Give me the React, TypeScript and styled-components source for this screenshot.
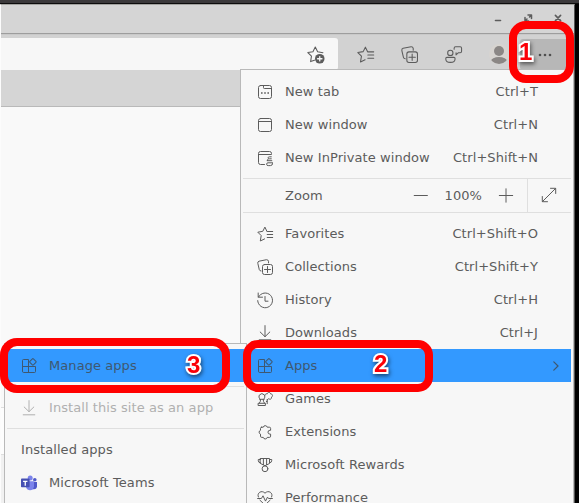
import React from "react";
import styled, { createGlobalStyle } from "styled-components";

const GlobalStyle = createGlobalStyle`
  * { box-sizing: border-box; }
  body { margin: 0; background: #000; overflow: hidden; }
`;

const Screen = styled.div`
  position: relative;
  width: 579px;
  height: 503px;
  overflow: hidden;
  background: #000;
  font-family: "DejaVu Sans", sans-serif;
  font-size: 13px;
  letter-spacing: 0.07px;
  color: #5c5c5c;
`;

const Desktop = styled.div`
  height: 4px;
  background: #3b393b;
  border-bottom: 1px solid #0c0c0c;
`;

const Window = styled.div`
  width: 575px;
  height: 499px;
  overflow: hidden;
  background: #fafafa;
  border-top: 1px solid #a3a3a0;
  border-left: 1px solid #fcfcfc;
  border-right: 1px solid #555;
`;

const TitleBar = styled.div`
  height: 29px;
  background: #d5d5d5;
  border-bottom: 1px solid #9d9d9d;
  display: flex;
  justify-content: flex-end;
  gap: 18px;
  padding: 7px 10px 0 0;
`;

const Toolbar = styled.div`
  height: 36px;
  background: linear-gradient(#c9c9c9 0 1px, #d2d2d2 1px);
  display: flex;
  align-items: flex-end;
`;

const AddressBar = styled.div`
  width: 337px;
  height: 32px;
  background: #f7f7f7;
  border-radius: 0 3px 3px 0;
  display: flex;
  justify-content: flex-end;
  align-items: center;
  padding-right: 14px;
`;

const Tools = styled.div`
  height: 32px;
  display: flex;
  align-items: center;
  gap: 27px;
  padding-left: 19px;
`;

const Avatar = styled.div`
  width: 20px;
  height: 20px;
  border-radius: 50%;
  background: #d7d4d0;
  overflow: hidden;
`;

const MoreButton = styled.div`
  width: 50px;
  height: 31px;
  margin-left: 11px;
  background: #b7b7b7;
  border-radius: 3px;
  display: flex;
  align-items: center;
  justify-content: center;
`;

const TabStrip = styled.div`
  height: 37px;
  background: #d5d5d5;
  border-bottom: 1px solid #b9b9b9;
`;

const Page = styled.div`
  display: flex;
  flex-direction: column;
  background: #f9f9f9;
`;

const PageBand = styled.div<{ $h: number; $bg: string }>`
  height: ${(p) => p.$h}px;
  background: ${(p) => p.$bg};
  border-bottom: 1px solid #dedede;
`;

const Menu = styled.div<{ $x: number; $y: number; $w: number }>`
  position: absolute;
  left: ${(p) => p.$x}px;
  top: ${(p) => p.$y}px;
  width: ${(p) => p.$w}px;
  height: 460px;
  padding: 5px 2px;
  background: #f7f7f7;
  border: 1px solid #b9b9b9;
`;

const Row = styled.div<{ $active?: boolean; $muted?: boolean }>`
  height: 33px;
  display: flex;
  align-items: center;
  gap: 12px;
  padding: 0 33px 0 14px;
  white-space: nowrap;
  background: ${(p) => (p.$active ? "#3399ff" : "transparent")};
  color: ${(p) => (p.$active ? "#3f5870" : p.$muted ? "#b0b0b0" : "#5c5c5c")};
`;

const Label = styled.span`
  flex: 1;
`;

const ArrowSlot = styled.span`
  display: flex;
  margin-right: -21px;
`;

const Divider = styled.div`
  height: 1px;
  margin: 4px 0;
  background: #dfdfdf;
`;

const ZoomRow = styled.div`
  height: 35px;
  margin: 4px 0;
  border-top: 1px solid #dfdfdf;
  border-bottom: 1px solid #dfdfdf;
  display: flex;
  align-items: center;
  padding-left: 42px;
`;

const ZoomControls = styled.div`
  flex: 1;
  display: flex;
  align-items: center;
  justify-content: flex-end;
  gap: 16px;
  padding-right: 13px;
`;

const FullScreen = styled.div`
  width: 44px;
  height: 33px;
  border-left: 1px solid #dfdfdf;
  display: flex;
  align-items: center;
  padding: 0 0 1px 13px;
`;

const Highlight = styled.div<{ $x: number; $y: number; $w: number; $h: number; $r: number }>`
  position: absolute;
  left: ${(p) => p.$x}px;
  top: ${(p) => p.$y}px;
  width: ${(p) => p.$w}px;
  height: ${(p) => p.$h}px;
  border: 8px solid #ff0000;
  border-radius: ${(p) => p.$r}px;
`;

const StepNumber = styled.span<{ $x: number; $y: number }>`
  position: absolute;
  left: ${(p) => p.$x}px;
  top: ${(p) => p.$y}px;
  font: bold 24px/24px "Liberation Sans", Arial, sans-serif;
  color: #fb0007;
  -webkit-text-stroke: 4px #fff;
  paint-order: stroke fill;
  filter: drop-shadow(1px 2px 2px rgba(0, 0, 0, 0.55));
`;

const Glyph = styled.svg`
  display: block;
  flex: none;
  fill: none;
  stroke: currentColor;
  stroke-linecap: round;
  stroke-linejoin: round;
`;

type IconName =
  | "tab" | "window" | "private" | "favorites" | "collections" | "history" | "download"
  | "apps" | "games" | "extensions" | "rewards" | "performance" | "teams" | "favAdd"
  | "feedback" | "minus" | "plus" | "expand";

const icons: Record<IconName, React.ReactNode> = {
  tab: (
    <>
      <rect x="1.5" y="1.5" width="13" height="13" rx="2" />
      <path d="M6.5 1.7v2q0 .8.8.8h7.1" />
      <path d="M4 9h1.6M7.2 9h1.6M10.4 9H12" strokeWidth="1.4" strokeLinecap="butt" />
    </>
  ),
  window: (
    <>
      <rect x="1.5" y="1.5" width="13" height="13" rx="2" />
      <path d="M1.8 4.5h12.6" />
    </>
  ),
  private: (
    <>
      <path d="M7.5 14.5h-4q-2 0-2-2v-9q0-2 2-2h9q2 0 2 2v1H1.7" />
      <path d="M14.3 6.8h-2q-1.2 0-1.2 1t1.2 1h2M10.2 10.7h4.6M15.6 12.8H11q-1.4 0-1.4 1.4t1.6 1.4h2.2q2.2 0 2.2-2M11 9.2l-.6 1.4" />
    </>
  ),
  favorites: (
    <>
      <path d="M10 5.5 7.9 1.1 5.8 5.3.8 6.2 4.2 9.6 3.3 15 7.6 12.9" />
      <path d="M10.5 5.5h5.2M10.2 8.5h5.5M10.2 11.5h5.5" />
    </>
  ),
  collections: (
    <>
      <rect x="5.5" y="5.5" width="10" height="10" rx="2" />
      <path d="M10.5 7.5v6M7.5 10.5h6M11.5 3.9V2.3Q11.2.6 9.5.7L2 2.2Q.5 2.7.8 4.3l1.5 6.4q.4 1.3 1.7 1.3" />
    </>
  ),
  history: <path d="M1.2 1v4.2h4.3M1.5 5A7.4 7.4 0 1 1 .7 8.6M8 4.5v4.7h3" />,
  download: <path d="M8 .6v11M3.2 7 8 11.7 12.8 7M2.2 14.8h11.6" />,
  apps: (
    <>
      <path d="M1.5 8V2.5q0-1 1-1h5v13h-5q-1 0-1-1ZM1.5 8.5h13v5q0 1-1 1h-6" />
      <rect x="9.4" y="1.4" width="5" height="5" rx=".7" transform="rotate(45 11.9 3.9)" />
    </>
  ),
  games: (
    <>
      <path d="M3.1 8.2A3 3 0 1 1 6.7 8.2M2.6 8.3h4.6M3.6 8.5q.2 2.2-1.3 3.7M6.2 8.5q-.1 2.2 1.3 3.7M1.5 12.3h6.9v2.2H1.5Z" />
      <path d="M8 4.2C8 2.9 9.2 2.5 10.2 3 10.4.8 13.4.8 13.6 2.9c2-.1 2.6 2.4.9 3.3.4 1.9-1.6 2.6-2.8 1.5L10.2 9M10 10.5h-.6M10.2 8.5v4.2" />
    </>
  ),
  extensions: (
    <path d="M4.6 3.2H6.3A2 2 0 0 1 10.2 3.2h2.2q1.2 0 1.2 1.2V6.3h-.7a1.9 1.9 0 0 0 0 3.8h.7v2.1q0 1.2-1.2 1.2h-2.2A2 2 0 0 1 6.3 13.4H4.7q-1.2 0-1.2-1.2V10.1A2 2 0 0 1 3.5 6.3V4.4q0-1.2 1.1-1.2Z" />
  ),
  rewards: (
    <>
      <path d="M3.5 1.5h9v5L8 8.7 3.5 6.5ZM3.5 2.5H1.3v1.3q0 2 2.2 2M12.5 2.5h2.2v1.3q0 2-2.2 2M6.4 1.6v6M9.6 1.6v6" />
      <circle cx="8" cy="11.8" r="2.9" />
    </>
  ),
  performance: (
    <>
      <path d="M1.4 7C-.6 3 4.7-.5 8 3.2c3.4-3.7 8.6-.2 6.6 3.8M2.9 10.2 8 15l5.1-4.8" />
      <path d="M.6 8.5h3.8L6 5.8l2.5 5.3 2-4 1 1.4h3.9" />
    </>
  ),
  teams: (
    <g stroke="none">
      <circle cx="13.8" cy="4.7" r="1.8" fill="#5059c9" />
      <path d="M11 7h5v4.2q-.2 3-3 3H11Z" fill="#5059c9" />
      <circle cx="9.2" cy="3" r="2.5" fill="#7b83eb" />
      <path d="M6 6.2h7v5.1q-.4 4-4 4-3 0-4-3Z" fill="#7b83eb" />
      <rect x="0" y="3.6" width="8.6" height="8.7" rx=".8" fill="#4650b3" />
      <path d="M2.1 5.8h4.3V7H4.9v3.7H3.6V7H2.1Z" fill="#fff" />
    </g>
  ),
  favAdd: (
    <>
      <path d="M15 6.3 10 5.4 7.8 1 5.6 5.4.8 6.2 4.2 9.6 3.4 14.7 7 13.3" />
      <circle cx="12" cy="12" r="4.5" fill="currentColor" stroke="none" />
      <path d="M12 9.9v4.2M9.9 12h4.2" stroke="#f7f7f7" strokeWidth="1.2" />
    </>
  ),
  feedback: (
    <>
      <circle cx="5" cy="6.5" r="2.5" />
      <path d="M1.8 10.7h6.6q1.1 0 1.1 1.2 0 3.5-4.4 3.5T.7 11.9q0-1.2 1.1-1.2ZM8.6 3V2q0-1.3 1.3-1.3h4.4q1.3 0 1.3 1.3v3q0 1.3-1.3 1.3h-1.6l-2.3 2V6.4" />
    </>
  ),
  minus: <path d="M1.2 7.5h13.2" />,
  plus: <path d="M1.3 7.5h13.4M8 .8v13.4" />,
  expand: <path d="M1.5 14.5 14.5 1.5M9.5 1.3h5.2v5.2M1.3 9.5v5.2h5.2" />,
};

const Icon = ({ name, size = 16 }: { name: IconName; size?: number }) => (
  <Glyph width={size} height={size} viewBox="0 0 16 16" strokeWidth={1} overflow="visible">
    {icons[name]}
  </Glyph>
);

interface ItemProps {
  icon: IconName;
  text: string;
  keys?: string;
  active?: boolean;
  muted?: boolean;
  arrow?: boolean;
}

const Item = ({ icon, text, keys, active, muted, arrow }: ItemProps) => (
  <Row $active={active} $muted={muted}>
    <Icon name={icon} />
    <Label>{text}</Label>
    {keys && <span>{keys}</span>}
    {arrow && (
      <ArrowSlot>
        <Glyph width="6" height="10" viewBox="0 0 6 10" strokeWidth="1.2">
          <path d="M.8.8 5 5 .8 9.2" />
        </Glyph>
      </ArrowSlot>
    )}
  </Row>
);

export default function App() {
  return (
    <Screen>
      <GlobalStyle />
      <Desktop />
      <Window>
        <TitleBar>
          <Glyph width="12" height="12" viewBox="0 0 12 12" strokeWidth="1.6">
            <path d="M3.5 8.5h5" />
          </Glyph>
          <Glyph width="12" height="12" viewBox="0 0 12 12" strokeWidth="1.5">
            <path d="M6 3h3.5v3.5M3 5.5V9h3.5M7.5 5 9.3 3.2M5 7 3.2 8.8" />
          </Glyph>
          <Glyph width="12" height="12" viewBox="0 0 12 12" strokeWidth="1.6">
            <path d="m3.4 3.4 5.2 5.2M8.6 3.4 3.4 8.6" />
          </Glyph>
        </TitleBar>
        <Toolbar>
          <AddressBar>
            <Icon name="favAdd" size={17} />
          </AddressBar>
          <Tools>
            <Icon name="favorites" size={17} />
            <Icon name="collections" size={17} />
            <Icon name="feedback" size={17} />
            <Avatar>
              <Glyph width="20" height="20" viewBox="0 0 20 20">
                <g fill="#8b8785" stroke="none">
                  <circle cx="10" cy="7" r="5" />
                  <ellipse cx="10" cy="17" rx="8" ry="4" />
                </g>
              </Glyph>
            </Avatar>
          </Tools>
          <MoreButton>
            <Glyph width="16" height="4" viewBox="0 0 16 4">
              <g fill="#4f4f4f" stroke="none">
                <circle cx="3" cy="2" r="1.3" />
                <circle cx="8" cy="2" r="1.3" />
                <circle cx="13" cy="2" r="1.3" />
              </g>
            </Glyph>
          </MoreButton>
        </Toolbar>
        <TabStrip />
        <Page>
          <PageBand $h={301} $bg="#f9f9f9" />
          <PageBand $h={47} $bg="#fdfdfd" />
          <PageBand $h={60} $bg="#f1f1f1" />
        </Page>
      </Window>

      <Menu $x={240} $y={69} $w={334}>
        <Item icon="tab" text="New tab" keys="Ctrl+T" />
        <Item icon="window" text="New window" keys="Ctrl+N" />
        <Item icon="private" text="New InPrivate window" keys="Ctrl+Shift+N" />
        <ZoomRow>
          <span>Zoom</span>
          <ZoomControls>
            <Icon name="minus" />
            <span>100%</span>
            <Icon name="plus" />
          </ZoomControls>
          <FullScreen>
            <Icon name="expand" />
          </FullScreen>
        </ZoomRow>
        <Item icon="favorites" text="Favorites" keys="Ctrl+Shift+O" />
        <Item icon="collections" text="Collections" keys="Ctrl+Shift+Y" />
        <Item icon="history" text="History" keys="Ctrl+H" />
        <Item icon="download" text="Downloads" keys="Ctrl+J" />
        <Item icon="apps" text="Apps" active arrow />
        <Item icon="games" text="Games" />
        <Item icon="extensions" text="Extensions" />
        <Item icon="rewards" text="Microsoft Rewards" />
        <Item icon="performance" text="Performance" />
      </Menu>

      <Menu $x={4} $y={343} $w={243}>
        <Item icon="apps" text="Manage apps" active />
        <Divider />
        <Item icon="download" text="Install this site as an app" muted />
        <Divider />
        <Row>
          <Label>Installed apps</Label>
        </Row>
        <Item icon="teams" text="Microsoft Teams" />
      </Menu>

      <Highlight $x={509} $y={21} $w={65} $h={62} $r={17} />
      <Highlight $x={243} $y={340} $w={190} $h={52} $r={15} />
      <Highlight $x={0} $y={338} $w={230} $h={55} $r={17} />
      <StepNumber $x={519} $y={40}>1</StepNumber>
      <StepNumber $x={374} $y={352}>2</StepNumber>
      <StepNumber $x={187} $y={353}>3</StepNumber>
    </Screen>
  );
}
